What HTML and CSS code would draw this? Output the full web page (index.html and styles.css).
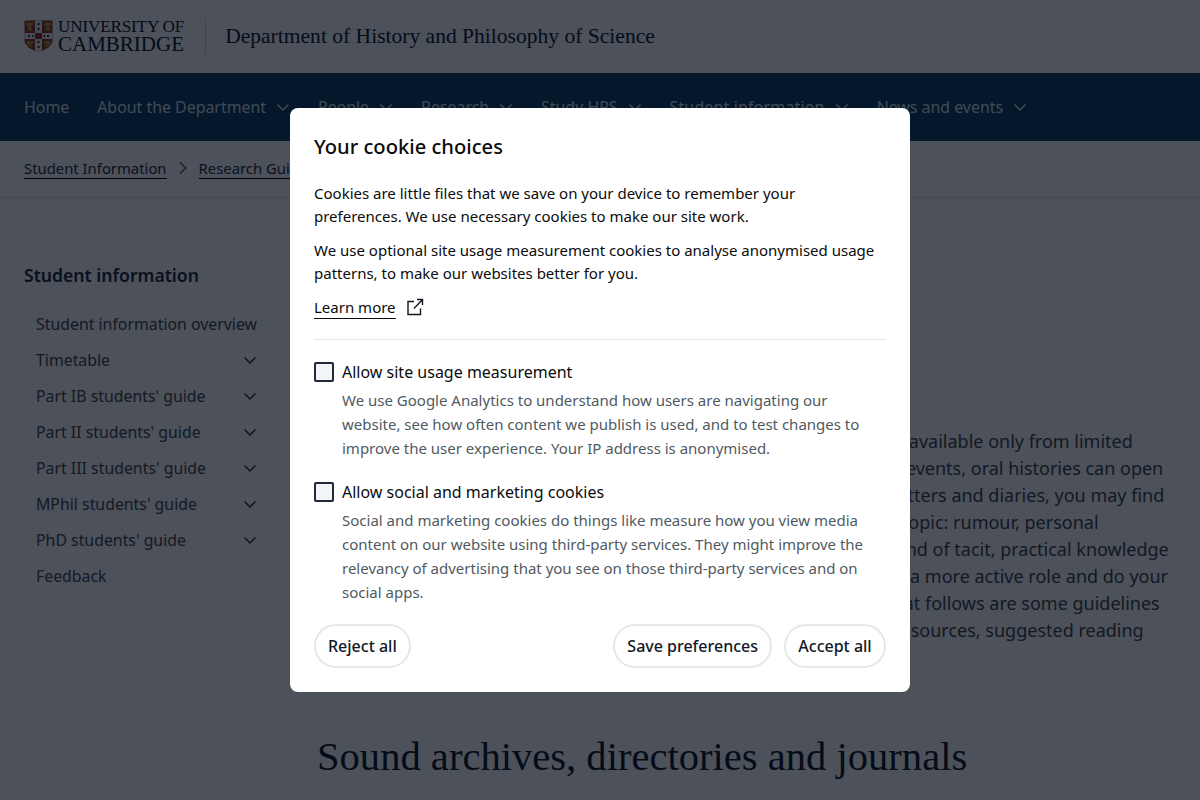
FILE: index.html
```html
<!DOCTYPE html>
<html lang="en">
<head>
<meta charset="utf-8">
<title>Department of History and Philosophy of Science</title>
<link rel="stylesheet" href="styles.css">
</head>
<body>
<header class="site-header">
  <a class="logo">
    <svg class="crest" width="29" height="33" viewBox="0 0 29 33">
      <path d="M0.500 0.500H28.500V20C28.500 27 20 30 14.500 32.500C9 30 0.500 27 0.500 20Z" fill="#93302a"/>
      <path d="M11 0.500H18V13H28.500V19H18V31L14.500 32.500L11 31V19H0.500V13H11Z" fill="#efeee8"/>
      <rect x="11" y="13" width="7" height="6" fill="#93302a"/>
      <g fill="#b8922e"><path d="M2 2.500H9V5L7 5.500L8.500 10.500H3L4.500 6.500L2 6Z"/><path d="M20 2.500H27V5L25 5.500L26.500 10.500H21L22.500 6.500L20 6Z"/><path d="M2.500 21H9V24L7 24.500L8.500 28L4 25.500L2.500 24Z"/><path d="M20 21H26.500V24L25 25.500L20.500 28L22 24.500L20 24Z"/></g>
      <g fill="#222"><rect x="13.500" y="3" width="2" height="2"/><rect x="13.500" y="8" width="2" height="2"/><rect x="13.500" y="21" width="2" height="2"/><rect x="13.500" y="26" width="2" height="2"/><rect x="4" y="15" width="2" height="2"/><rect x="8" y="15" width="1.500" height="2"/><rect x="23" y="15" width="2" height="2"/><rect x="19.500" y="15" width="1.500" height="2"/></g>
    </svg>
    <span class="logo-text"><span class="logo-top">UNIVERSITY OF</span><span class="logo-bottom">CAMBRIDGE</span></span>
  </a>
  <span class="header-rule"></span>
  <span class="dept">Department of History and Philosophy of Science</span>
</header>
<nav class="main-nav">
  <a class="nav-item">Home</a>
  <a class="nav-item">About the Department <svg class="chev" viewBox="0 0 14 14"><path d="M1.500 4.500L7 10L12.500 4.500"/></svg></a>
  <a class="nav-item">People <svg class="chev" viewBox="0 0 14 14"><path d="M1.500 4.500L7 10L12.500 4.500"/></svg></a>
  <a class="nav-item">Research <svg class="chev" viewBox="0 0 14 14"><path d="M1.500 4.500L7 10L12.500 4.500"/></svg></a>
  <a class="nav-item">Study HPS <svg class="chev" viewBox="0 0 14 14"><path d="M1.500 4.500L7 10L12.500 4.500"/></svg></a>
  <a class="nav-item nav-wide">Student information <svg class="chev" viewBox="0 0 14 14"><path d="M1.500 4.500L7 10L12.500 4.500"/></svg></a>
  <a class="nav-item">News and events <svg class="chev" viewBox="0 0 14 14"><path d="M1.500 4.500L7 10L12.500 4.500"/></svg></a>
</nav>
<div class="crumbs">
  <a class="crumb">Student Information</a>
  <svg class="crumb-sep" viewBox="0 0 10 14"><path d="M2 1.500L8 7L2 12.500"/></svg>
  <a class="crumb">Research Guides</a>
</div>
<main class="page">
  <aside class="side">
    <h2 class="side-title">Student information</h2>
    <ul class="side-list">
      <li class="side-item">Student information overview</li>
      <li class="side-item">Timetable <svg class="side-chev" viewBox="0 0 14 14"><path d="M1.500 4.500L7 10L12.500 4.500"/></svg></li>
      <li class="side-item">Part IB students' guide <svg class="side-chev" viewBox="0 0 14 14"><path d="M1.500 4.500L7 10L12.500 4.500"/></svg></li>
      <li class="side-item">Part II students' guide <svg class="side-chev" viewBox="0 0 14 14"><path d="M1.500 4.500L7 10L12.500 4.500"/></svg></li>
      <li class="side-item">Part III students' guide <svg class="side-chev" viewBox="0 0 14 14"><path d="M1.500 4.500L7 10L12.500 4.500"/></svg></li>
      <li class="side-item">MPhil students' guide <svg class="side-chev" viewBox="0 0 14 14"><path d="M1.500 4.500L7 10L12.500 4.500"/></svg></li>
      <li class="side-item">PhD students' guide <svg class="side-chev" viewBox="0 0 14 14"><path d="M1.500 4.500L7 10L12.500 4.500"/></svg></li>
      <li class="side-item">Feedback</li>
    </ul>
  </aside>
  <article class="content">
    <p class="body-text">
      Oral histories offer insights into themes for which written sources are available only from limited<br>
      perspective, or about which less was written. Recorded long after the events, oral histories can open<br>
      up new aspects of everyday experience that are only rarely found in letters and diaries, you may find<br>
      many things that are not normally written down or recorded on your topic: rumour, personal<br>
      private impressions, in-jokes, opinions, everyday memories and the kind of tacit, practical knowledge<br>
      that is hard to capture in any other way. If you wish, you can also take a more active role and do your<br>
      own interview with all the people who were concerned in them. In what follows are some guidelines<br>
      on how to find extant recordings and how to hold an interview, with resources, suggested reading<br>
      and advice.
    </p>
    <h1 class="section-title">Sound archives, directories and journals</h1>
  </article>
</main>

<div class="overlay">
  <section class="modal">
    <h2 class="modal-title">Your cookie choices</h2>
    <p class="modal-p">Cookies are little files that we save on your device to remember your preferences. We use necessary cookies to make our site work.</p>
    <p class="modal-p">We use optional site usage measurement cookies to analyse anonymised usage patterns, to make our websites better for you.</p>
    <p class="learn"><a class="learn-link">Learn more</a>
      <svg class="ext" viewBox="0 0 18 18"><path d="M8 3.500H2V16.500H14.500V10.500M8 10.500L16.500 1.500M11 1.500H16.500V7"/></svg>
    </p>
    <hr class="rule">
    <div class="option">
      <label class="opt-label"><span class="box"></span>Allow site usage measurement</label>
      <p class="opt-desc">We use Google Analytics to understand how users are navigating our website, see how often content we publish is used, and to test changes to improve the user experience. Your IP address is anonymised.</p>
    </div>
    <div class="option">
      <label class="opt-label"><span class="box"></span>Allow social and marketing cookies</label>
      <p class="opt-desc">Social and marketing cookies do things like measure how you view media content on our website using third-party services. They might improve the relevancy of advertising that you see on those third-party services and on social apps.</p>
    </div>
    <div class="actions">
      <button class="btn">Reject all</button>
      <span class="spacer"></span>
      <button class="btn">Save preferences</button>
      <button class="btn btn-accept">Accept all</button>
    </div>
  </section>
</div>
</body>
</html>
```

FILE: styles.css
```css
* { box-sizing: border-box; }
html, body { margin: 0; height: 800px; overflow: hidden; }
body { font-family: "Noto Sans", sans-serif; color: #1f2937; background: #fff; position: relative; }

.site-header { height: 73px; display: flex; align-items: center; padding: 0 24px; background: #fff; }
.logo { display: flex; align-items: center; gap: 5px; }
.crest { display: block; }
.logo-text { display: flex; flex-direction: column; font-family: "Liberation Serif", serif; color: #0b1420; line-height: 1; }
.logo-top { font-size: 17.200px; line-height: 16px; letter-spacing: -0.2px; }
.logo-bottom { font-size: 21px; line-height: 19px; }
.header-rule { width: 1px; height: 34px; background: #cbd5e1; margin: 0 20px 0 21px; }
.dept { font-family: "Liberation Serif", serif; font-size: 21.550px; color: #111827; margin-left: -1px; }

.main-nav { height: 68px; background: #113c60; display: flex; align-items: center; padding: 0 24px; gap: 28px; color: #d8e4ef; font-size: 15.900px; }
.nav-item { display: flex; align-items: center; gap: 10px; white-space: nowrap; }
.nav-wide { letter-spacing: 0.2px; }
.chev { width: 14px; height: 14px; fill: none; stroke: #d8e4ef; stroke-width: 1.500; }

.crumbs { height: 57px; display: flex; align-items: center; padding: 0 24px 2px; gap: 11px; border-bottom: 1px solid #e5e7eb; font-size: 14.850px; }
.crumb { color: #1f2937; border-bottom: 1px solid #000; line-height: 20px; white-space: nowrap; }
.crumb-sep { width: 10px; height: 14px; fill: none; stroke: #4b5563; stroke-width: 1.300; }

.page { display: flex; padding: 0 24px; }
.side { width: 233px; flex: none; padding-top: 64px; }
.side-title { margin: 0; font-size: 17.600px; font-weight: 600; line-height: 26px; color: #1f2937; }
.side-list { list-style: none; margin: 18px 0 0; padding: 0; }
.side-item { height: 36px; display: flex; align-items: center; justify-content: space-between; padding-left: 12px; font-size: 15.850px; color: #474747; white-space: nowrap; }
.side-chev { width: 14px; height: 14px; fill: none; stroke: #333; stroke-width: 1.500; }

.content { margin-left: 60px; padding-top: 230px; flex: 1; min-width: 0; }
.body-text { margin: 0 0 0 1px; font-size: 18px; line-height: 27px; color: #454545; white-space: nowrap; }
.section-title { margin: 62px 0 0; font-family: "Liberation Serif", serif; font-weight: 400; font-size: 40.600px; line-height: 48px; color: #111827; white-space: nowrap; }

.overlay { position: absolute; inset: 0; background: rgba(0, 7, 20, 0.7); display: flex; justify-content: center; align-items: flex-start; padding-top: 108px; }
.modal { width: 620px; height: 584px; background: #fff; border-radius: 8px; padding: 24px; color: #0b0c0c; }
.modal-title { margin: 0 0 22px; font-size: 20.150px; font-weight: 500; line-height: 28px; }
.modal-p { margin: 0 0 11px; font-size: 15px; line-height: 23px; }
.learn { margin: 0; display: flex; align-items: flex-start; gap: 10px; height: 23px; font-size: 15px; line-height: 21px; }
.learn-link { border-bottom: 1px solid #0b0c0c; margin-top: 1px; }
.ext { width: 18px; height: 18px; margin-top: 2px; fill: none; stroke: #111827; stroke-width: 1.400; }
.rule { border: 0; border-top: 1px solid #e5e7eb; margin: 20px 0 20px; }
.option { margin-bottom: 20px; }
.opt-label { display: flex; align-items: center; gap: 8px; font-size: 16px; line-height: 24px; }
.box { width: 20px; height: 20px; border: 2px solid #1f2937; border-radius: 2px; background: #f3f4f6; }
.opt-desc { margin: 4px 0 0 28px; font-size: 15px; line-height: 24px; color: #505a5f; }
.actions { display: flex; gap: 12px; }
.spacer { flex: 1; }
.btn { height: 44px; padding: 0 12px; border: 2px solid #e5e7eb; border-radius: 22px; background: #fff; font: 500 16px "Noto Sans", sans-serif; color: #111827; }
.btn-accept { min-width: 102px; }
```
